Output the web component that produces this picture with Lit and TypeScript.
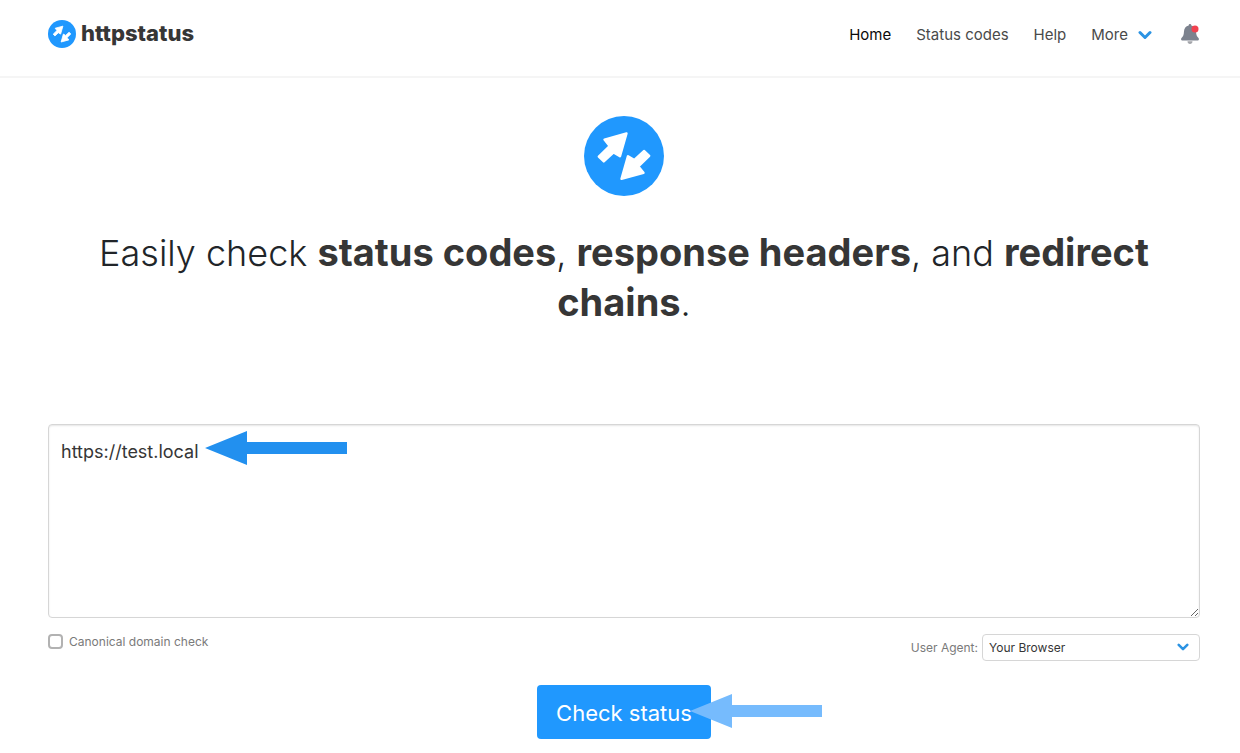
import { LitElement, html, css, svg } from "lit";
import { customElement, property } from "lit/decorators.js";

@customElement("status-logo")
export class StatusLogo extends LitElement {
  static styles = css`
    :host { display: block; flex: none; }
    svg { display: block; width: 100%; height: 100%; }
  `;

  render() {
    const arrow = svg`<path d="M42.5 17.5 20.5 23.6 25.6 30 14.8 40.6 19.8 45.4 29.6 36.4 36 40.2Z"/>`;
    return html`
      <svg viewBox="0 0 80 80" aria-hidden="true">
        <circle cx="40" cy="40" r="40" fill="#2098fe" />
        <g fill="#fff" stroke="#fff" stroke-width="2.4" stroke-linejoin="round">
          ${arrow}
          <g transform="rotate(180 40 40.2)">${arrow}</g>
        </g>
      </svg>
    `;
  }
}

@customElement("pointer-arrow")
export class PointerArrow extends LitElement {
  static styles = css`
    :host { display: block; pointer-events: none; }
    svg { display: block; }
  `;

  @property({ type: Number }) length = 142;

  render() {
    const end = this.length;
    return html`
      <svg width=${end} height="34" viewBox="0 0 ${end} 34" aria-hidden="true">
        <path fill="currentColor" d="M0 17 42 0V11H${end}V23H42V34Z" />
      </svg>
    `;
  }
}

@customElement("app-root")
export class AppRoot extends LitElement {
  static styles = css`
    :host {
      display: block;
      min-height: 100vh;
      background: #fff;
      color: #363636;
      font-family: Inter, "Liberation Sans", sans-serif;
      font-size: 16px;
      line-height: 24px;
    }
    *, *::before { box-sizing: border-box; }
    button, textarea, select { font-family: inherit; }
    .header {
      display: flex;
      align-items: center;
      justify-content: space-between;
      padding: 16px 40px 24px 48px;
      border-bottom: 2px solid #f5f5f5;
    }
    .brand {
      display: flex;
      align-items: center;
      gap: 5px;
      height: 36px;
      color: #363636;
      font-size: 22px;
      font-weight: 800;
      line-height: 24px;
      text-decoration: none;
    }
    .brand-name { padding-bottom: 2px; }
    .brand-logo { width: 28px; height: 28px; }
    .nav { display: flex; align-items: center; gap: 25px; }
    .link {
      padding: 2px 0 0;
      border: 0;
      background: none;
      color: #4a4a4a;
      font-size: 15px;
      line-height: 24px;
      text-decoration: none;
    }
    .current { color: #0a0a0a; }
    .more { display: flex; align-items: center; gap: 10px; }
    .chevron { display: block; width: 14px; height: 10px; }
    .bell { display: block; margin-left: 3px; padding: 0; border: 0; background: none; }
    .bell svg { display: block; }
    .main { padding: 38px 40px 14px 48px; }
    .hero { display: flex; flex-direction: column; align-items: center; gap: 32px; }
    .hero-logo { width: 80px; height: 80px; }
    .title {
      max-width: 1100px;
      margin: 0;
      color: #212529;
      font-size: 36px;
      font-weight: 300;
      line-height: 50px;
      text-align: center;
    }
    .title strong {
      color: #363636;
      font-size: 38px;
      font-weight: 700;
      line-height: 40px;
    }
    .form { margin-top: 96px; }
    .field { position: relative; }
    .urls {
      display: block;
      width: 100%;
      height: 194px;
      padding: 12px;
      border: 1px solid #d6d6d6;
      border-radius: 4px;
      box-shadow: inset 0 1px 2px rgba(10, 10, 10, 0.1);
      background: #fff;
      color: #363636;
      font-size: 18px;
      line-height: 30px;
      resize: vertical;
      outline: none;
    }
    .url-arrow { position: absolute; top: 7px; left: 157px; color: #2290ef; }
    .options {
      display: flex;
      align-items: flex-start;
      justify-content: space-between;
      margin-top: 16px;
      color: #7a7a7a;
      font-size: 12px;
      line-height: 16px;
    }
    .check { display: flex; align-items: flex-start; gap: 6px; }
    .box {
      appearance: none;
      width: 15px;
      height: 15px;
      margin: 0;
      border: 2px solid #b2b2b2;
      border-radius: 4px;
      background: #fff;
    }
    .box:checked { border-color: #2098fe; background: #2098fe; }
    .agent { display: flex; align-items: center; gap: 4px; }
    .select { position: relative; }
    .select select {
      appearance: none;
      display: block;
      width: 218px;
      height: 27px;
      padding: 0 32px 0 6px;
      border: 1px solid #d6d6d6;
      border-radius: 4px;
      background: #fff;
      color: #363636;
      font-size: 12px;
    }
    .select .chevron {
      position: absolute;
      top: 8px;
      right: 11px;
      width: 12px;
      pointer-events: none;
    }
    .actions { display: flex; justify-content: center; margin-top: 24px; }
    .action { position: relative; }
    .submit {
      display: block;
      height: 54px;
      padding: 2px 19px 0;
      border: 0;
      border-radius: 4px;
      background: #2098fe;
      color: #fff;
      font-size: 22px;
      font-weight: 400;
      line-height: 36px;
    }
    .submit-arrow { position: absolute; top: 9px; right: -111px; color: #76bbfd; }
  `;

  private chevron() {
    return html`
      <svg class="chevron" viewBox="0 0 14 10" fill="none" stroke="#2b93e3"
        stroke-width="3" stroke-linecap="round" stroke-linejoin="round" aria-hidden="true">
        <path d="M2 2.5 7 7.5 12 2.5" />
      </svg>
    `;
  }

  render() {
    return html`
      <header class="header">
        <a class="brand" href="#">
          <status-logo class="brand-logo"></status-logo>
          <span class="brand-name">httpstatus</span>
        </a>
        <nav class="nav" aria-label="Main">
          <a class="link current" href="#" aria-current="page">Home</a>
          <a class="link" href="#codes">Status codes</a>
          <a class="link" href="#help">Help</a>
          <button class="link more" type="button">More ${this.chevron()}</button>
          <button class="bell" type="button" aria-label="Notifications">
            <svg width="20" height="22" viewBox="0 0 20 22" aria-hidden="true">
              <path fill="#7c828e" d="M10 1C9.1 1 8.7 1.6 8.7 2.4 5.7 3 4.2 5.2 4 8.3 3.8 12 3.2 13.5 1.5 15.1 .7 16 1 17.5 2.2 17.5H17.8C19 17.5 19.3 16 18.5 15.1 16.8 13.5 16.2 12 16 8.3 15.8 5.2 14.3 3 11.3 2.4 11.3 1.6 10.9 1 10 1Z" />
              <path fill="#a3a5aa" d="M7.5 18.3H12.5C12.5 20 11.4 21 10 21S7.5 20 7.5 18.3Z" />
              <circle cx="15" cy="6" r="3.5" fill="#f1414f" />
            </svg>
          </button>
        </nav>
      </header>
      <main class="main">
        <div class="hero">
          <status-logo class="hero-logo"></status-logo>
          <h1 class="title">
            Easily check <strong>status codes</strong>, <strong>response headers</strong>, and
            <strong>redirect chains</strong>.
          </h1>
        </div>
        <form class="form" @submit=${(e: Event) => e.preventDefault()}>
          <div class="field">
            <textarea class="urls" aria-label="URLs" spellcheck="false" .value=${"https://test.local"}></textarea>
            <pointer-arrow class="url-arrow" .length=${142}></pointer-arrow>
          </div>
          <div class="options">
            <label class="check"><input class="box" type="checkbox" />Canonical domain check</label>
            <div class="agent">
              <label for="agent">User Agent:</label>
              <div class="select">
                <select id="agent"><option>Your Browser</option></select>
                ${this.chevron()}
              </div>
            </div>
          </div>
          <div class="actions">
            <div class="action">
              <button class="submit" type="submit">Check status</button>
              <pointer-arrow class="submit-arrow" .length=${132}></pointer-arrow>
            </div>
          </div>
        </form>
      </main>
    `;
  }
}
